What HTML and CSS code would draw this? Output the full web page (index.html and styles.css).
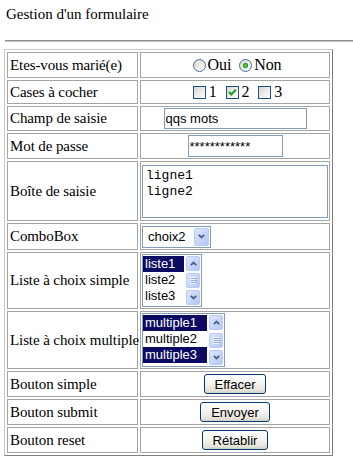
FILE: index.html
```html
<!DOCTYPE html>
<html>
<head>
    <title>Gestion d'un formulaire</title>
    <link rel="stylesheet" href="styles.css">
</head>
<body>

<p class="titre">Gestion d'un formulaire</p>
<hr>

<form>
<table class="formulaire">
    <tr>
        <td class="libelle">Etes-vous marié(e)</td>
        <td class="centre">
            <span class="radio"></span>Oui
            <span class="radio coche"></span>Non
        </td>
    </tr>
    <tr class="ligne-cases">
        <td class="libelle">Cases à cocher</td>
        <td class="centre">
            <span class="case"></span>1
            <span class="case"><svg width="11" height="11" viewBox="0 0 11 11"><path d="M2 5 L4.3 7.5 L8.8 2.8" fill="none" stroke="#21a121" stroke-width="2.2"/></svg></span>2
            <span class="case"></span>3
        </td>
    </tr>
    <tr class="ligne-champ">
        <td class="libelle">Champ de saisie</td>
        <td class="centre"><input type="text" class="champ" value="qqs mots"></td>
    </tr>
    <tr>
        <td class="libelle">Mot de passe</td>
        <td class="centre"><input type="text" class="champ motdepasse" value="************" readonly></td>
    </tr>
    <tr class="ligne-zone">
        <td class="libelle">Boîte de saisie</td>
        <td><textarea class="zone">ligne1
ligne2</textarea></td>
    </tr>
    <tr class="ligne-combo">
        <td class="libelle">ComboBox</td>
        <td>
            <div class="combo">
                <span class="combo-texte">choix2</span>
                <span class="combo-bouton"><svg width="7" height="5" viewBox="0 0 7 5"><path d="M0.8 0.8 L3.5 3.5 L6.2 0.8" fill="none" stroke="#4d6185" stroke-width="1.8"/></svg></span>
            </div>
        </td>
    </tr>
    <tr class="ligne-liste">
        <td class="libelle">Liste à choix simple</td>
        <td>
            <div class="liste liste-simple">
                <ul class="options">
                    <li class="choisi">liste1</li>
                    <li>liste2</li>
                    <li>liste3</li>
                </ul>
                <div class="defilement">
                    <span class="fleche"><svg width="7" height="5" viewBox="0 0 7 5"><path d="M0.8 4.2 L3.5 1.5 L6.2 4.2" fill="none" stroke="#4d6185" stroke-width="1.8"/></svg></span>
                    <span class="curseur"><svg width="7" height="7" viewBox="0 0 7 7"><path d="M0 0.5h6M0 2.5h6M0 4.5h6M0 6.5h6" stroke="#f2f6ff"/><path d="M1 1.5h6M1 3.5h6M1 5.5h6" stroke="#8eaaf0"/></svg></span>
                    <span class="fleche"><svg width="7" height="5" viewBox="0 0 7 5"><path d="M0.8 0.8 L3.5 3.5 L6.2 0.8" fill="none" stroke="#4d6185" stroke-width="1.8"/></svg></span>
                </div>
            </div>
        </td>
    </tr>
    <tr class="ligne-multiple">
        <td class="libelle">Liste à choix multiple</td>
        <td>
            <div class="liste liste-multiple">
                <ul class="options">
                    <li class="choisi">multiple1</li>
                    <li>multiple2</li>
                    <li class="choisi">multiple3</li>
                </ul>
                <div class="defilement">
                    <span class="fleche"><svg width="7" height="5" viewBox="0 0 7 5"><path d="M0.8 4.2 L3.5 1.5 L6.2 4.2" fill="none" stroke="#4d6185" stroke-width="1.8"/></svg></span>
                    <span class="curseur"><svg width="7" height="7" viewBox="0 0 7 7"><path d="M0 0.5h6M0 2.5h6M0 4.5h6M0 6.5h6" stroke="#f2f6ff"/><path d="M1 1.5h6M1 3.5h6M1 5.5h6" stroke="#8eaaf0"/></svg></span>
                    <span class="fleche"><svg width="7" height="5" viewBox="0 0 7 5"><path d="M0.8 0.8 L3.5 3.5 L6.2 0.8" fill="none" stroke="#4d6185" stroke-width="1.8"/></svg></span>
                </div>
            </div>
        </td>
    </tr>
    <tr>
        <td class="libelle">Bouton simple</td>
        <td class="centre"><input type="button" class="bouton" value="Effacer"></td>
    </tr>
    <tr>
        <td class="libelle">Bouton submit</td>
        <td class="centre"><input type="submit" class="bouton" value="Envoyer"></td>
    </tr>
    <tr>
        <td class="libelle">Bouton reset</td>
        <td class="centre"><input type="reset" class="bouton" value="Rétablir"></td>
    </tr>
</table>
</form>

</body>
</html>
```

FILE: styles.css
```css
body {
    margin: 0;
    font-family: "Liberation Serif", "Times New Roman", serif;
    font-size: 15px;
    color: #000;
    background-color: #fff;
}

.titre {
    margin: 6px 0 0 6px;
    font-size: 15px;
    line-height: 17px;
}

hr {
    height: 0;
    margin: 17px 0 7px 5px;
    border: none;
    border-top: 1px solid #8c8c8c;
    border-bottom: 1px solid #c4c4c4;
}

form {
    margin: 0;
}

.formulaire {
    width: 329px;
    margin-left: 4px;
    table-layout: fixed;
    border-collapse: separate;
    border-spacing: 2px;
    border: 1px solid;
    border-color: #c8c8c8 #7e7e7e #7e7e7e #c8c8c8;
    letter-spacing: -0.1px;
}

.formulaire tr {
    height: 26px;
}

.formulaire tr.ligne-cases { height: 24px; }
.formulaire tr.ligne-champ { height: 25px; }
.formulaire tr.ligne-zone { height: 60px; }
.formulaire tr.ligne-combo { height: 27px; }
.formulaire tr.ligne-liste { height: 57px; }
.formulaire tr.ligne-multiple { height: 58px; }

.formulaire td {
    padding: 1px;
    border: 1px solid #a4a4a4;
    vertical-align: middle;
}

.formulaire td.libelle {
    width: 126px;
    padding-left: 2px;
    white-space: nowrap;
}

.centre {
    text-align: center;
    font-size: 16px;
}

/* boutons radio et cases */
.radio {
    display: inline-block;
    box-sizing: border-box;
    width: 13px;
    height: 13px;
    margin: 0 2px 0 4px;
    border: 1px solid #4a6f93;
    border-radius: 50%;
    background: linear-gradient(135deg, #d8d6ce, #ffffff);
    vertical-align: -2px;
}

.radio.coche {
    background: radial-gradient(circle, #6fcf6f 0, #21a121 2.4px, transparent 3px),
                linear-gradient(135deg, #d8d6ce, #ffffff);
}

.case {
    display: inline-block;
    box-sizing: border-box;
    width: 13px;
    height: 13px;
    margin: 0 3px 0 5px;
    border: 1px solid #1c5180;
    background: linear-gradient(135deg, #d8d6ce, #ffffff);
    vertical-align: -2px;
}

.case svg {
    display: block;
}

/* champs */
.champ {
    box-sizing: border-box;
    width: 143px;
    height: 21px;
    margin: 0;
    padding: 0 1px;
    border: 1px solid #7f9db9;
    font: 13px "Liberation Sans", Arial, sans-serif;
    letter-spacing: 0;
    color: #000;
    vertical-align: middle;
}

.motdepasse {
    width: 95px;
    height: 22px;
}

.zone {
    display: block;
    box-sizing: border-box;
    width: 186px;
    height: 53px;
    margin: 0;
    padding: 2px 3px;
    border: 1px solid #7f9db9;
    font: 13px/16px "Liberation Mono", "Courier New", monospace;
    letter-spacing: 0;
    color: #000;
    resize: none;
    overflow: hidden;
}

/* liste deroulante */
.combo {
    display: flex;
    align-items: center;
    box-sizing: border-box;
    width: 69px;
    height: 22px;
    border: 1px solid #7f9db9;
    background-color: #fff;
    font: 13px "Liberation Sans", Arial, sans-serif;
    letter-spacing: 0;
}

.combo-texte {
    flex: 1;
    padding-left: 5px;
}

.combo-bouton,
.fleche,
.curseur {
    display: flex;
    align-items: center;
    justify-content: center;
    box-sizing: border-box;
    border: 1px solid #b9cbf5;
    border-radius: 2px;
    background: linear-gradient(to bottom right, #dce6fe, #b3c7f6);
}

.combo-bouton {
    width: 15px;
    height: 18px;
    margin-right: 1px;
}

/* listes a choix */
.liste {
    display: flex;
    box-sizing: border-box;
    height: 53px;
    border: 1px solid #7f9db9;
    background-color: #fff;
    font: 13px "Liberation Sans", Arial, sans-serif;
    letter-spacing: 0;
}

.liste-simple {
    width: 60px;
}

.liste-multiple {
    width: 83px;
    height: 54px;
}

.options {
    flex: 1;
    margin: 0;
    padding: 1px 0 0;
    list-style: none;
}

.options li {
    height: 16px;
    line-height: 16px;
    padding-left: 2px;
    white-space: nowrap;
}

.options li.choisi {
    background-color: #0a0a62;
    color: #fff;
}

.defilement {
    display: flex;
    flex-direction: column;
    justify-content: space-between;
    box-sizing: border-box;
    width: 17px;
    padding: 1px 1px 1px 2px;
}

.fleche,
.curseur {
    height: 15px;
}

/* boutons */
.bouton {
    box-sizing: border-box;
    height: 20px;
    margin: 0;
    padding: 0 10px;
    border: 1px solid #003c74;
    border-radius: 3px;
    background: linear-gradient(to bottom, #ffffff 0%, #f5f4ef 45%, #e6e3da 85%, #d6d0c5 100%);
    font: 13px "Liberation Sans", Arial, sans-serif;
    letter-spacing: 0;
    color: #000;
    vertical-align: middle;
}
```
